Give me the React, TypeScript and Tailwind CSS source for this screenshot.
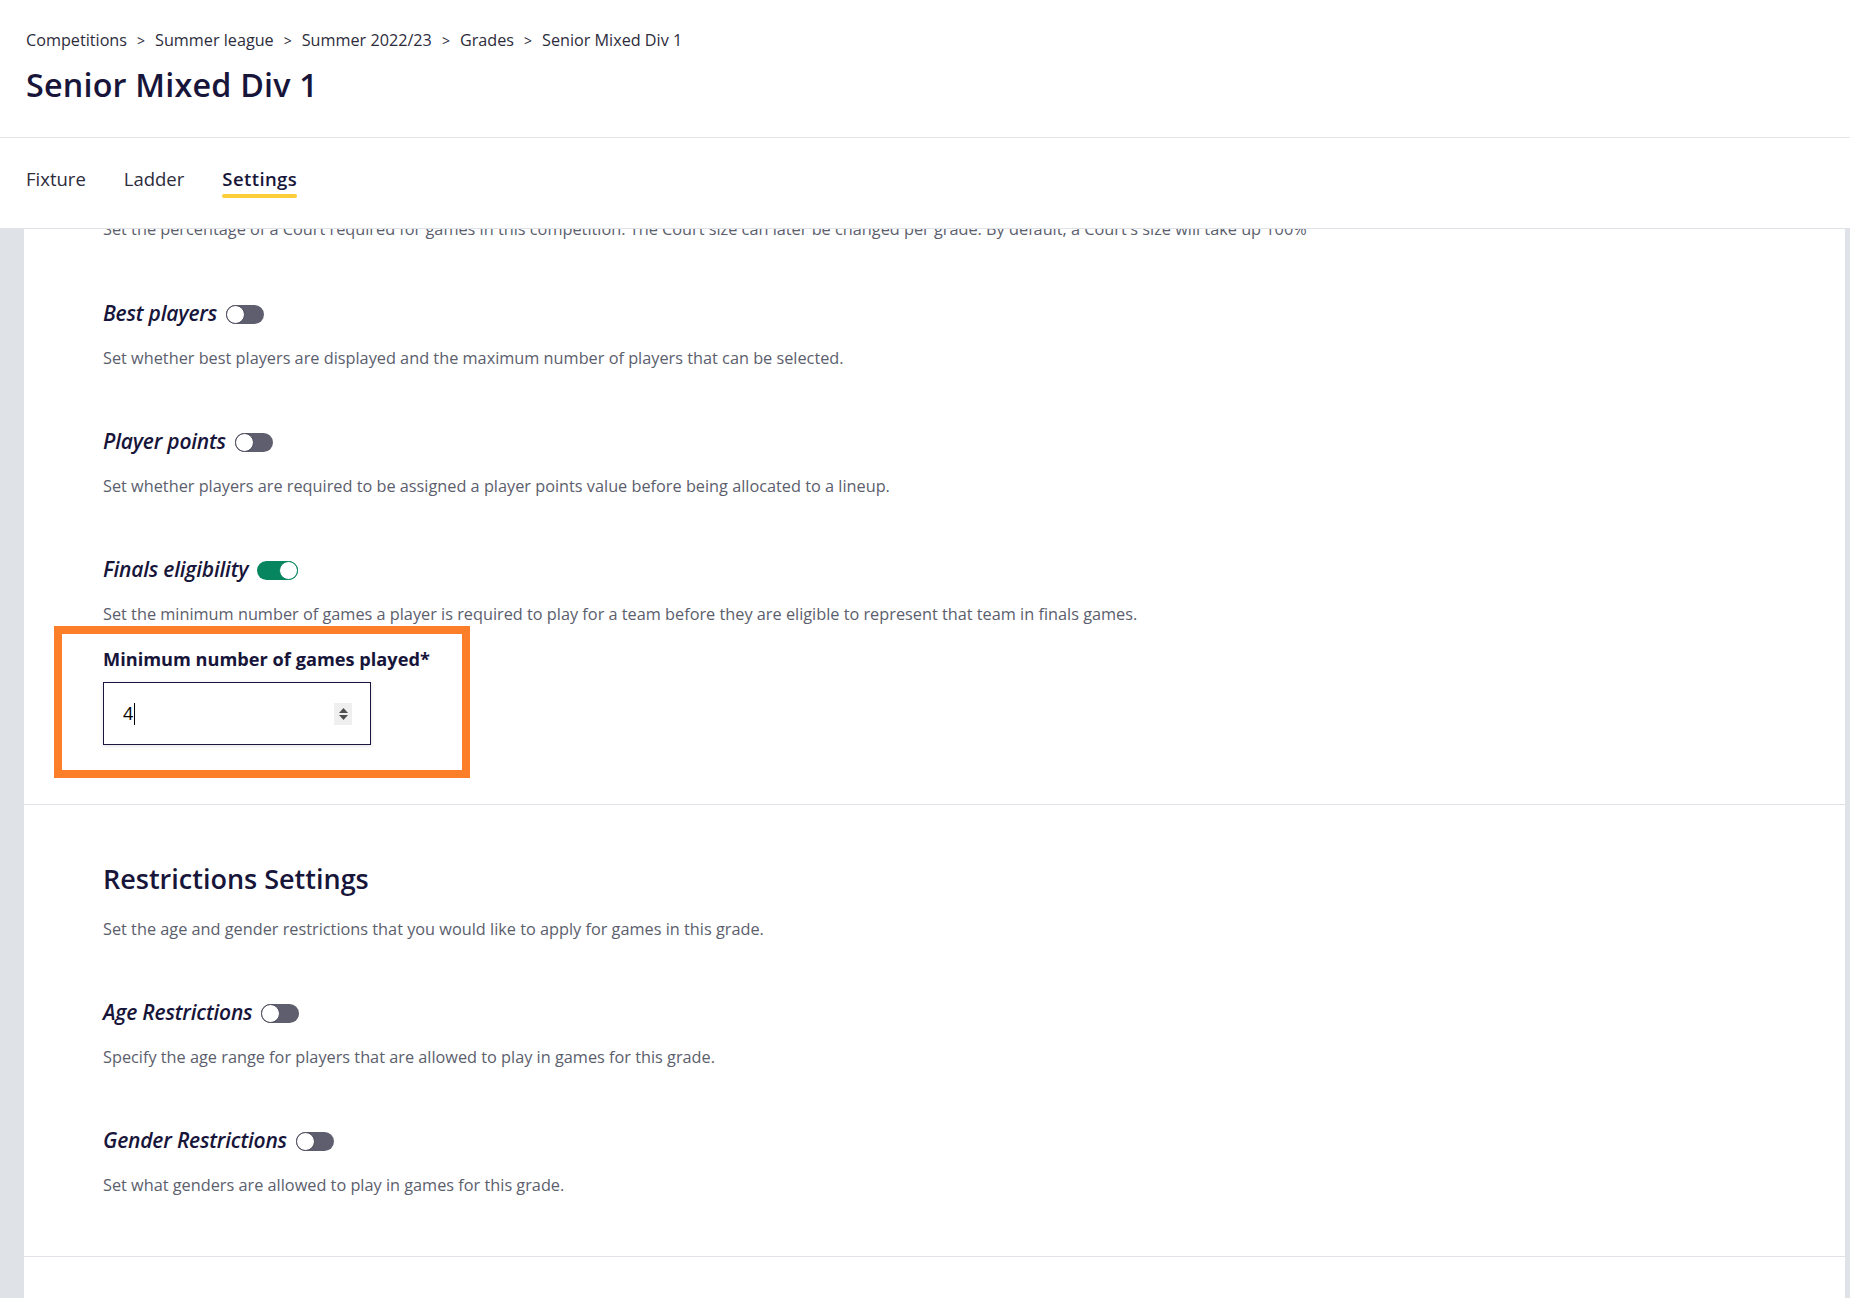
import React from "react";

const crumbs = ["Competitions", "Summer league", "Summer 2022/23", "Grades", "Senior Mixed Div 1"];
const tabs = ["Fixture", "Ladder", "Settings"];

function Toggle({ on = false }: { on?: boolean }) {
  if (on) {
    return (
      <span className="flex h-[19px] w-[41px] items-center justify-end rounded-full bg-[#06855f]">
        <span className="h-[19px] w-[19px] rounded-full border-[1.5px] border-[#06855f] bg-white" />
      </span>
    );
  }
  return (
    <span className="flex h-[19px] w-[38px] items-center rounded-full bg-[#5e5e6f]">
      <span className="h-[19px] w-[19px] rounded-full border-[1.5px] border-[#4a4a5a] bg-white" />
    </span>
  );
}

function SettingRow({
  title,
  text,
  on,
  first,
}: {
  title: string;
  text: string;
  on?: boolean;
  first?: boolean;
}) {
  return (
    <div className={first ? "mt-[59px]" : "mt-[58px]"}>
      <div className="flex h-[28px] items-center gap-[9px]">
        <h3 className="text-[21px] font-semibold italic tracking-[-0.2px] text-[#17153a]">{title}</h3>
        <Toggle on={on} />
      </div>
      <p className="mt-[18px] text-[16.3px] leading-[24px] text-[#5b5e6d]">{text}</p>
    </div>
  );
}

export default function GradeSettingsPage() {
  return (
    <main className="h-[1298px] overflow-hidden bg-white font-['Open_Sans',sans-serif] text-[#17153a]">
      <header className="border-b border-[#e3e5e9] px-[26px] pt-[28px] pb-[33px]">
        <nav className="flex h-[24px] items-center text-[16.2px] text-[#2d2c3c]">
          {crumbs.map((c, i) => (
            <span key={c} className="flex items-center">
              {i > 0 && <span className="mx-[10px] text-[14px]">&gt;</span>}
              {c}
            </span>
          ))}
        </nav>
        <h1 className="mt-[12px] text-[32.3px] font-semibold leading-[40px] tracking-[0.2px]">Senior Mixed Div 1</h1>
      </header>

      <div className="flex items-start gap-[38px] border-b border-[#dfe2e7] px-[26px] pt-[27px] pb-[30px]">
        {tabs.map((t) => (
          <div key={t} className="flex flex-col">
            <span
              className={
                t === "Settings"
                  ? "text-[18.5px] font-semibold leading-[28px] tracking-[0.4px] text-[#17153a]"
                  : "text-[18.5px] leading-[28px] text-[#2d2c3c]"
              }
            >
              {t}
            </span>
            <span
              className={
                t === "Settings" ? "mt-[1px] h-[4px] rounded-full bg-[#fbcd38]" : "mt-[1px] h-[4px]"
              }
            />
          </div>
        ))}
      </div>

      <div className="flex h-full bg-[#dfe2e6] pl-[24px] pr-[5px]">
        <div className="flex-1 overflow-hidden bg-white">
          <section className="border-b border-[#e1e3e8] pl-[79px] pb-[26px]">
            <p className="-mt-[12px] text-[16.3px] leading-[24px] text-[#5b5e6d]">
              Set the percentage of a Court required for games in this competition. The Court size can later be
              changed per grade. By default, a Court's size will take up 100%
            </p>

            <SettingRow
              first
              title="Best players"
              text="Set whether best players are displayed and the maximum number of players that can be selected."
            />
            <SettingRow
              title="Player points"
              text="Set whether players are required to be assigned a player points value before being allocated to a lineup."
            />
            <SettingRow
              on
              title="Finals eligibility"
              text="Set the minimum number of games a player is required to play for a team before they are eligible to represent that team in finals games."
            />

            <div className="-ml-[49px] w-[416px] border-[8px] border-[#fd7e29] pt-[13px] pb-[25px] pl-[41px]">
              <label className="block text-[18.2px] font-bold leading-[24px] text-[#17153a]">
                Minimum number of games played*
              </label>
              <div className="mt-[11px] flex h-[63px] w-[268px] items-center justify-between border-[1.5px] border-[#1c1540] pl-[19px] pr-[18px] shadow-[0_1px_4px_rgba(0,0,0,0.12)]">
                <span className="flex items-center text-[18px] text-black">
                  4<span className="ml-[1px] h-[22px] w-[1px] bg-black" />
                </span>
                <span className="flex h-[22px] w-[18px] flex-col items-center justify-center gap-[2px] bg-[#efefef]">
                  <svg width="9" height="5" viewBox="0 0 9 5">
                    <path d="M4.5 0L9 5H0z" fill="#4f4f4f" />
                  </svg>
                  <svg width="9" height="5" viewBox="0 0 9 5">
                    <path d="M0 0h9L4.5 5z" fill="#4f4f4f" />
                  </svg>
                </span>
              </div>
            </div>
          </section>

          <section className="border-b border-[#e1e3e8] pl-[79px] pt-[58px] pb-[59px]">
            <h2 className="text-[27px] font-semibold leading-[32px] text-[#17153a]">Restrictions Settings</h2>
            <p className="mt-[22px] text-[16.3px] leading-[24px] text-[#5b5e6d]">
              Set the age and gender restrictions that you would like to apply for games in this grade.
            </p>
            <SettingRow
              title="Age Restrictions"
              text="Specify the age range for players that are allowed to play in games for this grade."
            />
            <SettingRow
              title="Gender Restrictions"
              text="Set what genders are allowed to play in games for this grade."
            />
          </section>
        </div>
      </div>
    </main>
  );
}
